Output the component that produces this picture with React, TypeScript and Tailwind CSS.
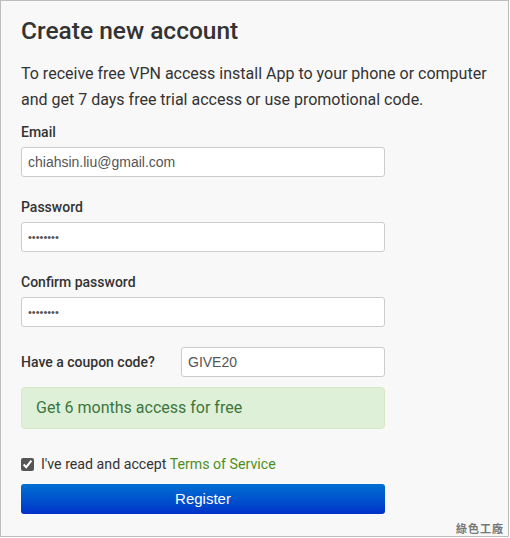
import { useState } from "react";

function Field({ label, type, value }: { label: string; type: string; value: string }) {
  return (
    <div className="flex flex-col">
      <label className="text-[14px] font-medium leading-[20px] text-[#333]">{label}</label>
      <input
        type={type}
        defaultValue={value}
        className={`mt-[5px] h-[30px] w-[364px] rounded-[3px] border border-[#ccc] bg-white px-[6px] font-['Liberation_Sans',Arial,sans-serif] text-[#555] outline-none ${
          type === "password" ? "text-[11px]" : "text-[14px]"
        }`}
      />
    </div>
  );
}

export default function App() {
  const [agree, setAgree] = useState(true);

  return (
    <div className="relative h-[538px] w-[510px] bg-white font-['Roboto',sans-serif]">
      <div className="h-[537px] w-[509px] border border-[#bdbdbd] bg-[#f8f8f8] px-[20px] pt-[13px]">
        <h1 className="text-[24.5px] font-medium leading-[34px] text-[#333]">Create new account</h1>
        <p className="mt-[13px] text-[16px] leading-[26px] text-[#333]">
          To receive free VPN access install App to your phone or computer and get 7 days free trial access or use promotional code.
        </p>

        <div className="mt-[9px] flex flex-col gap-[20px]">
          <Field label="Email" type="email" value="chiahsin.liu@gmail.com" />
          <Field label="Password" type="password" value="password" />
          <Field label="Confirm password" type="password" value="password" />
        </div>

        <div className="mt-[20px] flex w-[364px] items-center">
          <span className="w-[160px] text-[14px] font-medium text-[#333]">Have a coupon code?</span>
          <input
            type="text"
            defaultValue="GIVE20"
            className="h-[30px] flex-1 rounded-[3px] border border-[#ccc] bg-white px-[6px] font-['Liberation_Sans',Arial,sans-serif] text-[14px] text-[#555] outline-none"
          />
        </div>

        <div className="mt-[10px] flex h-[42px] w-[364px] items-center rounded-[4px] border border-[#d6e9c6] bg-[#dff0d8] px-[14px] text-[16px] text-[#3c763d]">
          Get 6 months access for free
        </div>

        <label className="mt-[25px] flex items-center gap-[7px] text-[14.2px] text-[#333]">
          <input
            type="checkbox"
            checked={agree}
            onChange={(e) => setAgree(e.target.checked)}
            className="h-[13px] w-[13px] accent-[#555]"
          />
          <span>
            I've read and accept <a className="text-[#4e8f1c]">Terms of Service</a>
          </span>
        </label>

        <button className="mt-[9px] h-[30px] w-[364px] rounded-[3px] bg-gradient-to-b from-[#006fd2] to-[#0030c9] font-['Liberation_Sans',Arial,sans-serif] text-[15px] text-white">
          Register
        </button>
      </div>
      <span className="absolute bottom-[4px] right-[6px] font-['Noto_Sans_CJK_TC',sans-serif] text-[11px] font-bold leading-[12px] tracking-[1px] text-[#777]">
        綠色工廠
      </span>
    </div>
  );
}
